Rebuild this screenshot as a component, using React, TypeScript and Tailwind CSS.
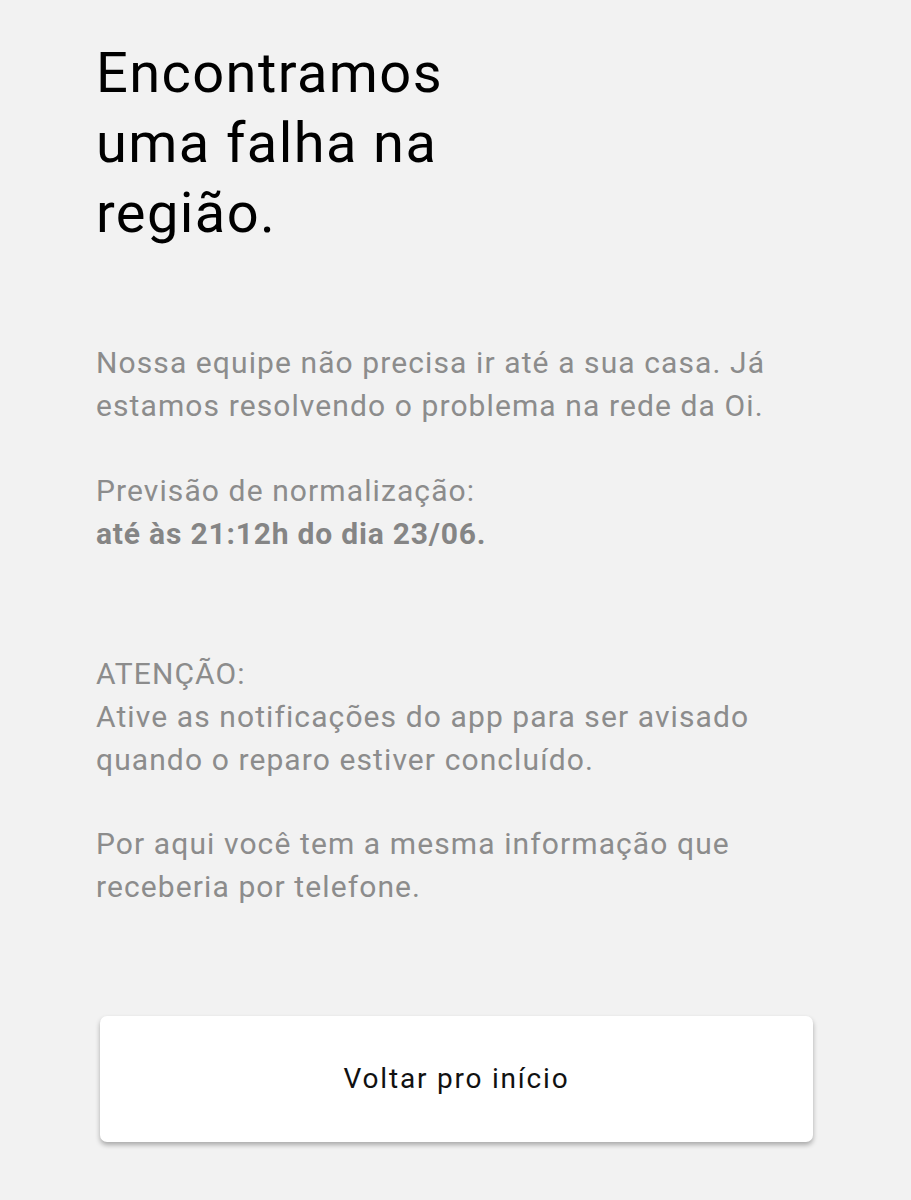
import React from "react";

export default function App() {
  const body = "text-[30px] leading-[43px] text-[#8c8c8c] whitespace-nowrap tracking-[1.1px]";
  return (
    <div
      className="min-h-[1200px] w-full bg-[#f2f2f2] flex flex-col"
      style={{ fontFamily: "Roboto, 'Liberation Sans', sans-serif" }}
    >
      <div className="pl-[96px] pt-[38px]">
        <h1 className="text-[56px] leading-[70px] text-black font-normal tracking-[1.4px] whitespace-nowrap">
          Encontramos
          <br />
          uma falha na
          <br />
          região.
        </h1>
        <p className={`${body} mt-[93px]`}>
          Nossa equipe não precisa ir até a sua casa. Já
          <br />
          estamos resolvendo o problema na rede da Oi.
        </p>
        <p className={`${body} mt-[42px]`}>
          Previsão de normalização:
          <br />
          <span className="font-bold text-[#858585] tracking-[0.8px]">até às 21:12h do dia 23/06.</span>
        </p>
        <p className={`${body} mt-[97px]`}>
          ATENÇÃO:
          <br />
          Ative as notificações do app para ser avisado
          <br />
          quando o reparo estiver concluído.
        </p>
        <p className={`${body} mt-[41px]`}>
          Por aqui você tem a mesma informação que
          <br />
          receberia por telefone.
        </p>
      </div>
      <div className="pl-[100px] pr-[98px] mt-[108px]">
        <button className="w-full h-[126px] bg-white rounded-[7px] shadow-[0_3px_5px_rgba(0,0,0,0.3)] flex items-center justify-center text-[28px] text-[#111] tracking-[1.8px]">
          Voltar pro início
        </button>
      </div>
    </div>
  );
}
